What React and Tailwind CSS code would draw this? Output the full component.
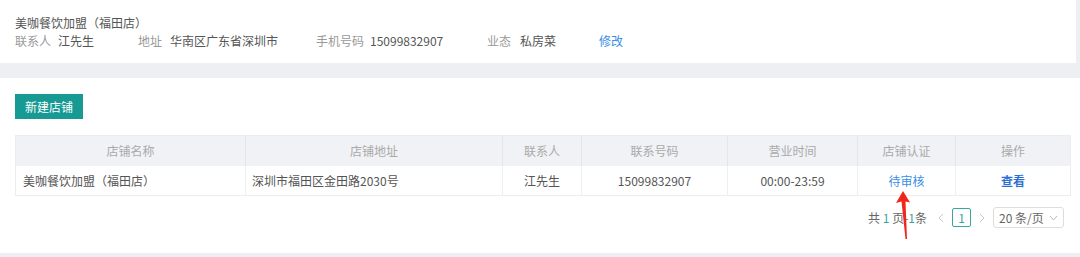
import React from 'react';

const cols = [
  { title: '店铺名称', w: 'w-[230px]', align: 'text-left pl-[7px]' },
  { title: '店铺地址', w: 'w-[257px]', align: 'text-left pl-[6px]' },
  { title: '联系人', w: 'w-[79px]', align: 'text-center' },
  { title: '联系号码', w: 'w-[146px]', align: 'text-center' },
  { title: '营业时间', w: 'w-[130px]', align: 'text-center' },
  { title: '店铺认证', w: 'w-[98px]', align: 'text-center' },
  { title: '操作', w: 'flex-1', align: 'text-center' },
];

const row = [
  { text: '美咖餐饮加盟（福田店）', cls: 'text-[#555]' },
  { text: '深圳市福田区金田路2030号', cls: 'text-[#555]' },
  { text: '江先生', cls: 'text-[#555]' },
  { text: '15099832907', cls: 'text-[#555]' },
  { text: '00:00-23:59', cls: 'text-[#555]' },
  { text: '待审核', cls: 'text-[#3a8ee6]' },
  { text: '查看', cls: 'text-[#2a6fd0] font-bold' },
];

function Chevron({ dir }) {
  return (
    <svg width="6" height="10" viewBox="0 0 6 10">
      <path d={dir === 'left' ? 'M5 1L1 5l4 4' : 'M1 1l4 4-4 4'} fill="none" stroke="#c8c8c8" strokeWidth="1" />
    </svg>
  );
}

export default function App() {
  return (
    <div className="w-[1080px] h-[257px] bg-[#eeeff3] text-[12px] overflow-hidden relative" style={{ fontFamily: '"Noto Sans CJK SC", "Noto Sans", sans-serif' }}>
      {/* Store info */}
      <div className="h-[63px] w-[1076px] bg-white pl-[15px] pt-[14px] leading-[18px]">
        <div className="text-[#555]">美咖餐饮加盟（福田店）</div>
        <div className="flex items-center">
          <span className="text-[#999] w-[43px]">联系人</span>
          <span className="text-[#555] w-[80px]">江先生</span>
          <span className="text-[#999] w-[32px]">地址</span>
          <span className="text-[#555] w-[146px]">华南区广东省深圳市</span>
          <span className="text-[#999] w-[54px]">手机号码</span>
          <span className="text-[#555] w-[117px]">15099832907</span>
          <span className="text-[#999] w-[33px]">业态</span>
          <span className="text-[#555] w-[79px]">私房菜</span>
          <span className="text-[#3a8ee6]">修改</span>
        </div>
      </div>

      {/* Store list */}
      <div className="mt-[15px] h-[175px] bg-white px-[15px] pt-[16px]">
        <button className="h-[25px] w-[68px] bg-[#179a94] text-white text-[12px]">新建店铺</button>

        <div className="mt-[16px] w-[1056px] border border-[#ebedf0]">
          <div className="flex h-[30px] bg-[#f0f2f5] text-[#aaa]">
            {cols.map((c, i) => (
              <div key={c.title} className={`${c.w} flex items-center justify-center ${i < cols.length - 1 ? 'border-r border-[#e4e6ea]' : ''}`}>
                {c.title}
              </div>
            ))}
          </div>
          <div className="flex h-[29px] bg-white">
            {row.map((cell, i) => (
              <div key={i} className={`${cols[i].w} ${cols[i].align} ${cell.cls} flex items-center ${cols[i].align === 'text-center' ? 'justify-center' : ''} ${i < row.length - 1 ? 'border-r border-[#edeff2]' : ''}`}>
                {cell.text}
              </div>
            ))}
          </div>
        </div>

        {/* Pagination */}
        <div className="flex items-center justify-end mt-[11px] pr-[1px] text-[#666]">
          <span className="mr-[11px]">
            共 <span className="text-[#3aa6a0]">1</span> 页-<span className="text-[#3aa6a0]">1</span>条
          </span>
          <Chevron dir="left" />
          <span className="w-[19px] h-[19px] border border-[#3aa6a0] rounded-[2px] flex items-center justify-center text-[#3aa6a0] mx-[8px]">1</span>
          <Chevron dir="right" />
          <div className="ml-[8px] w-[71px] h-[21px] border border-[#ddd] rounded-[3px] flex items-center justify-between px-[5px] text-[#666]">
            <span>20&nbsp;条/页</span>
            <svg width="9" height="6" viewBox="0 0 9 6"><path d="M1 1l3.5 4L8 1" fill="none" stroke="#bbb" strokeWidth="1" /></svg>
          </div>
        </div>
      </div>

      {/* Red annotation arrow */}
      <svg className="absolute left-[893px] top-[190px]" width="22" height="52" viewBox="0 0 22 52">
        <path d="M10 1 L3 13 L8.5 11.5 L12.5 49 L14 49 L12.5 11.5 L17 12.5 Z" fill="#f0261b" />
      </svg>
    </div>
  );
}
